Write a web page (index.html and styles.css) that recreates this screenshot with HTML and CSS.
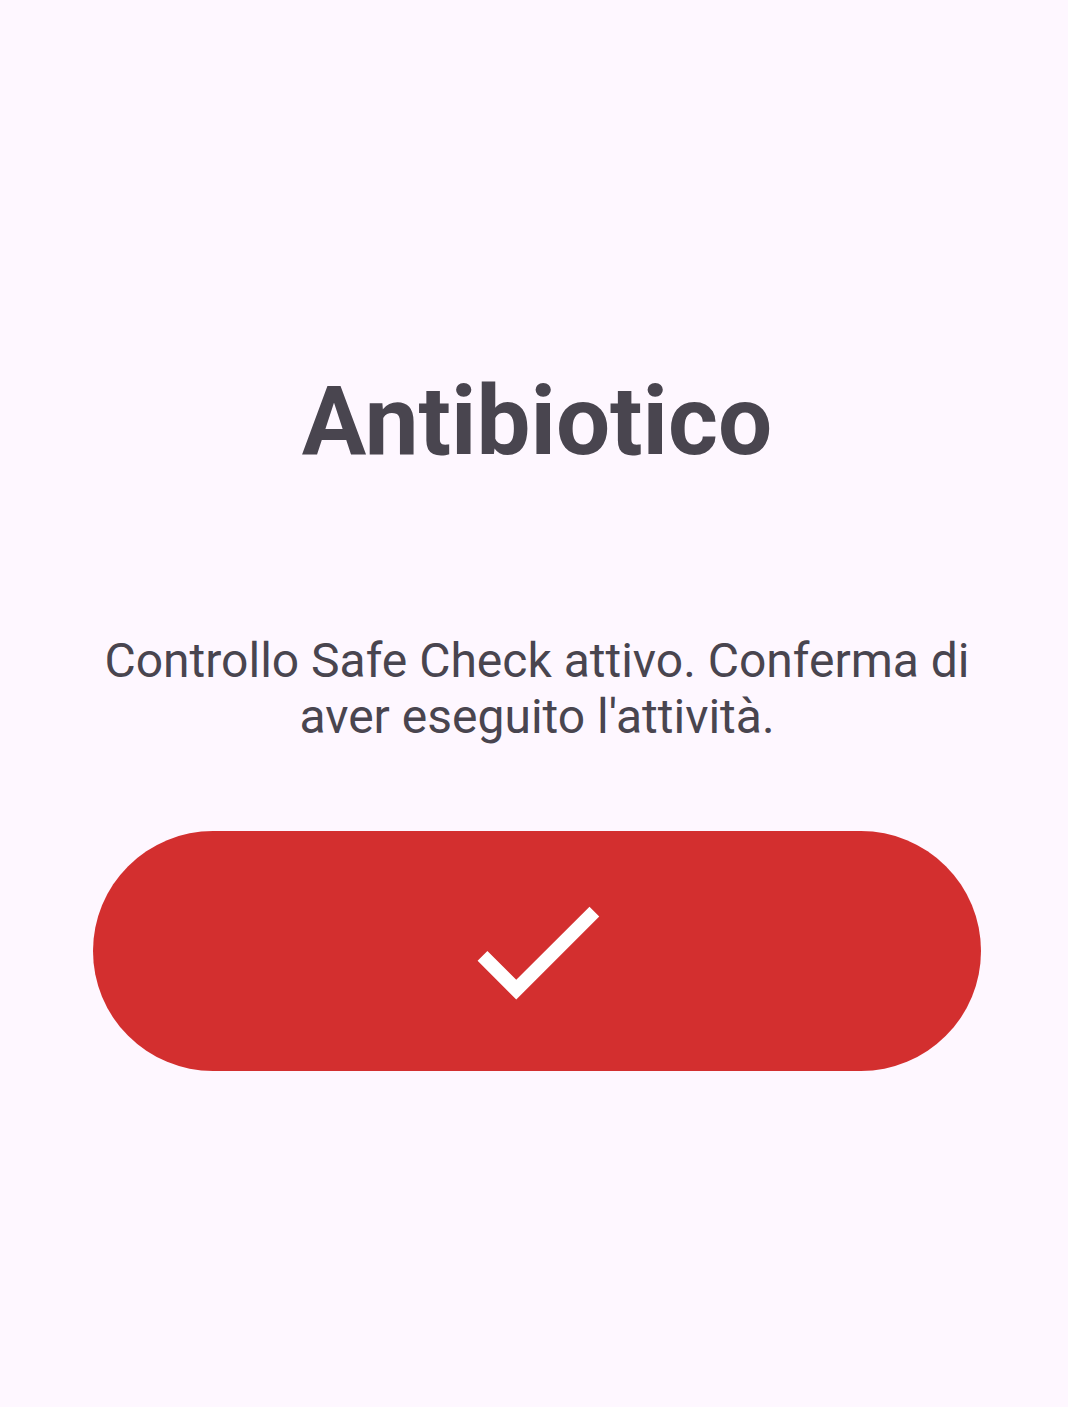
FILE: index.html
```html
<!DOCTYPE html>
<html lang="it">
<head>
<meta charset="utf-8">
<title>Antibiotico</title>
<link rel="stylesheet" href="styles.css">
</head>
<body>
<main class="screen">
  <h1 class="title">Antibiotico</h1>
  <p class="message">Controllo Safe Check attivo. Conferma di aver eseguito l'attività.</p>
  <button class="confirm" type="button" aria-label="Conferma">
    <svg class="check" viewBox="0 0 24 24" aria-hidden="true">
      <path d="M9 16.17L4.83 12l-1.42 1.41L9 19 21 7l-1.41-1.41z" fill="#ffffff"/>
    </svg>
  </button>
</main>
</body>
</html>
```

FILE: styles.css
```css
html, body {
  margin: 0;
  padding: 0;
  background: #fef7ff;
}

body {
  font-family: Roboto, "Noto Sans", sans-serif;
  color: #49454f;
  min-height: 1407px;
}

.screen {
  display: flex;
  flex-direction: column;
  align-items: center;
  width: 888px;
  margin-left: 93px;
  padding-top: 362px;
}

.title {
  margin: 0;
  font-size: 96px;
  line-height: 118px;
  font-weight: 700;
  text-align: center;
}

.message {
  margin: 153px 0 0;
  font-size: 48px;
  line-height: 56px;
  font-weight: 400;
  text-align: center;
}

.confirm {
  margin-top: 86px;
  width: 888px;
  height: 240px;
  border: none;
  border-radius: 120px;
  background: #d32f2f;
  display: flex;
  align-items: center;
  justify-content: center;
  padding: 0;
}

.check {
  width: 166px;
  height: 166px;
  display: block;
}
```
